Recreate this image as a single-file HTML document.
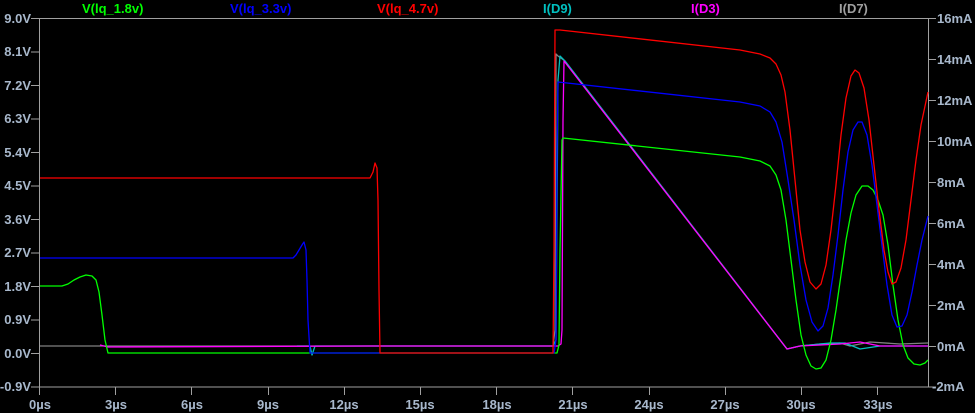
<!DOCTYPE html>
<html><head><style>
html,body{margin:0;padding:0;background:#000;}
svg{display:block;}
text{font-family:"Liberation Sans",sans-serif;font-weight:bold;font-size:13px;}
.ax{fill:#a8b8cc;}
</style></head><body>
<svg width="975" height="413" viewBox="0 0 975 413">
<rect width="975" height="413" fill="#000"/>
<g stroke="#a0a0a0" stroke-width="1" fill="none">
<rect x="39.5" y="18.5" width="889" height="368.5"/>
<path d="M31 18.5h8M31 52h8M31 85.5h8M31 119h8M31 152.5h8M31 186h8M31 219.5h8M31 253h8M31 286.5h8M31 320h8M31 353.5h8M31 387h8"/>
<path d="M929 18.5h7M929 59.5h7M929 100.5h7M929 141.5h7M929 182.5h7M929 223.5h7M929 264.5h7M929 305.5h7M929 346.5h7M929 387h7"/>
<path d="M39.5 387v8M115.5 387v8M191.5 387v8M268.5 387v8M344.5 387v8M420.5 387v8M496.5 387v8M572.5 387v8M649.5 387v8M725.5 387v8M801.5 387v8M877.5 387v8"/>
</g>
<g class="ax" text-anchor="end">
<text x="31" y="23">9.0V</text><text x="31" y="56">8.1V</text><text x="31" y="90">7.2V</text><text x="31" y="123">6.3V</text><text x="31" y="157">5.4V</text><text x="31" y="190">4.5V</text><text x="31" y="224">3.6V</text><text x="31" y="257">2.7V</text><text x="31" y="291">1.8V</text><text x="31" y="324">0.9V</text><text x="31" y="358">0.0V</text><text x="31" y="391">-0.9V</text>
</g>
<g class="ax">
<text x="937" y="23">16mA</text><text x="937" y="64">14mA</text><text x="937" y="105">12mA</text><text x="937" y="146">10mA</text><text x="937" y="187">8mA</text><text x="937" y="228">6mA</text><text x="937" y="269">4mA</text><text x="937" y="310">2mA</text><text x="937" y="351">0mA</text><text x="932" y="391">-2mA</text>
</g>
<g class="ax" text-anchor="middle">
<text x="40" y="409">0µs</text><text x="116" y="409">3µs</text><text x="192" y="409">6µs</text><text x="268" y="409">9µs</text><text x="344" y="409">12µs</text><text x="420" y="409">15µs</text><text x="497" y="409">18µs</text><text x="573" y="409">21µs</text><text x="649" y="409">24µs</text><text x="725" y="409">27µs</text><text x="801" y="409">30µs</text><text x="878" y="409">33µs</text>
</g>
<text x="82" y="13" fill="#00ff00">V(lq_1.8v)</text>
<text x="230" y="13" fill="#0000ff">V(lq_3.3v)</text>
<text x="377" y="13" fill="#ff0000">V(lq_4.7v)</text>
<text x="543" y="13" fill="#00c0c0">I(D9)</text>
<text x="691" y="13" fill="#ff00ff">I(D3)</text>
<text x="839" y="13" fill="#a0a0a0">I(D7)</text>
<g fill="none" stroke-width="1.3" stroke-linejoin="round">
<polyline stroke="#808080" points="40,346 553,346 555,330 556,54 558,56 565,61 787,349 800,346 820,344 840,343 850,346 870,342 900,344 928,343"/>
<polyline stroke="#00c0c0" points="297,346 310,346 312,355 315,346 553,346 556,340 558,80 560,56 565,61 787,349 800,346 830,343 845,343 860,349 880,346 928,346"/>
<polyline stroke="#ff00ff" points="100,345 108,347 370,346 376,346 558,346 561,344 562,330 563,120 564,61 787,349 800,346 840,344 860,342 880,346 928,346"/>
<polyline stroke="#00ff00" points="40,286 62,286 68,284 74,280 80,277 86,275 92,276 96,280 99,292 102,315 105,340 108,353 557,353 559,345 560,250 562,140 563,138 740,157 760,161 770,166 776,175 781,190 786,220 791,260 796,300 801,335 806,355 811,366 816,369 821,368 826,360 831,340 836,310 841,275 846,240 851,213 856,195 862,186 868,186 873,190 878,200 883,215 888,245 893,285 898,320 903,345 908,358 914,364 920,365 925,363 928,360"/>
<polyline stroke="#0000ff" points="40,258 293,258 296,255 299,250 302,245 304,242 306,250 307,280 308,320 310,353 554,353 556,340 557,150 558,82 740,102 760,106 770,112 776,122 782,142 788,180 794,220 800,265 806,300 812,322 818,331 823,326 828,308 833,275 838,235 843,190 848,152 853,130 858,122 862,122 867,135 872,165 877,205 882,245 887,285 892,315 897,327 902,326 907,315 912,292 917,265 922,240 928,216"/>
<polyline stroke="#ff0000" points="40,178 370,178 373,172 375,163 377,168 378,200 379,290 380,353 553,353 554,250 555,30 560,30 740,50 760,54 770,58 776,64 781,75 785,92 790,130 795,180 800,230 805,262 810,282 816,289 821,284 826,265 831,230 836,185 841,135 846,98 851,76 855,70 859,73 864,88 869,120 874,165 879,210 884,250 888,272 892,284 896,282 901,268 906,240 911,200 916,160 921,125 928,92"/>
</g>
</svg>
</body></html>
